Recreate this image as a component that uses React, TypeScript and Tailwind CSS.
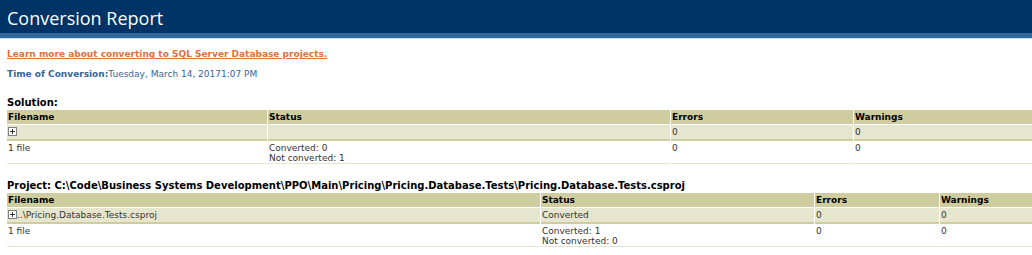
import React from "react";

type Row = { cells: React.ReactNode[]; kind: "head" | "item" | "sum" };

const solutionCols = [260, 402, 182, 200];
const projectCols = [533, 273, 124, 110];

function PlusBox() {
  return (
    <span className="inline-block w-[9px] h-[9px] border border-[#808080] bg-white align-[-1px] relative">
      <span className="absolute left-[1px] top-[3px] w-[5px] h-[1px] bg-[#333]" />
      <span className="absolute left-[3px] top-[1px] w-[1px] h-[5px] bg-[#333]" />
    </span>
  );
}

function ReportTable({ cols, rows }: { cols: number[]; rows: Row[] }) {
  return (
    <table className="border-separate border-spacing-x-[1px] border-spacing-y-0 ml-[6px] w-[1040px] table-fixed">
      <colgroup>
        {cols.map((w, i) => (
          <col key={i} style={{ width: w }} />
        ))}
      </colgroup>
      <tbody>
        {rows.map((r, i) => (
          <tr key={i}>
            {r.cells.map((c, j) => (
              <td
                key={j}
                className={
                  r.kind === "head"
                    ? "bg-[#cfcd9f] font-bold text-black h-[15px] leading-[13px] px-[1px] py-0 border-b border-white"
                    : r.kind === "item"
                    ? "bg-[#e6e6cf] text-[#333] h-[16px] leading-[13px] px-[1px] py-0 border-b-2 border-[#cfcd9f]"
                    : "bg-white text-[#333] align-top leading-[10px] px-[1px] pt-[2px] h-[23px] border-b border-[#e6e6cf]"
                }
              >
                {c}
              </td>
            ))}
          </tr>
        ))}
      </tbody>
    </table>
  );
}

export default function App() {
  return (
    <div className="w-[1032px] h-[255px] overflow-hidden bg-white font-['DejaVu_Sans',sans-serif] text-[9px]">
      {/* Banner */}
      <div className="bg-[#003366] h-[33px] px-[7px] pt-[2px] flex items-center">
        <h1 className="text-white text-[18px] font-['Open_Sans',sans-serif] leading-none">
          Conversion Report
        </h1>
      </div>
      <div className="bg-[#336699] h-[5px]" />
      <div className="bg-[#cfe2f2] h-[1px]" />

      <div className="pt-[10px]">
        <div className="ml-[7px] leading-[11px]">
          <a href="#" className="text-[#e0703c] font-bold underline text-[9px]">
            Learn more about converting to SQL Server Database projects.
          </a>
        </div>
        <p className="ml-[7px] mt-[9px] leading-[11px] text-[#336699] text-[9px]">
          <span className="font-bold">Time of Conversion:</span>Tuesday, March 14, 20171:07 PM
        </p>

        <h2 className="ml-[7px] mt-[17px] mb-[1px] leading-[12px] font-bold text-[10px] text-black">
          Solution:
        </h2>
        <ReportTable
          cols={solutionCols}
          rows={[
            { kind: "head", cells: ["Filename", "Status", "Errors", "Warnings"] },
            { kind: "item", cells: [<PlusBox key="p" />, "", "0", "0"] },
            {
              kind: "sum",
              cells: [
                "1 file",
                <>
                  Converted: 0
                  <br />
                  Not converted: 1
                </>,
                "0",
                "0",
              ],
            },
          ]}
        />

        <h2 className="ml-[7px] mt-[16px] mb-[1px] leading-[12px] font-bold text-[10px] text-black">
          Project: C:\Code\Business Systems Development\PPO\Main\Pricing\Pricing.Database.Tests\Pricing.Database.Tests.csproj
        </h2>
        <ReportTable
          cols={projectCols}
          rows={[
            { kind: "head", cells: ["Filename", "Status", "Errors", "Warnings"] },
            {
              kind: "item",
              cells: [
                <>
                  <PlusBox />
                  ..\Pricing.Database.Tests.csproj
                </>,
                "Converted",
                "0",
                "0",
              ],
            },
            {
              kind: "sum",
              cells: [
                "1 file",
                <>
                  Converted: 1
                  <br />
                  Not converted: 0
                </>,
                "0",
                "0",
              ],
            },
          ]}
        />
      </div>
    </div>
  );
}
